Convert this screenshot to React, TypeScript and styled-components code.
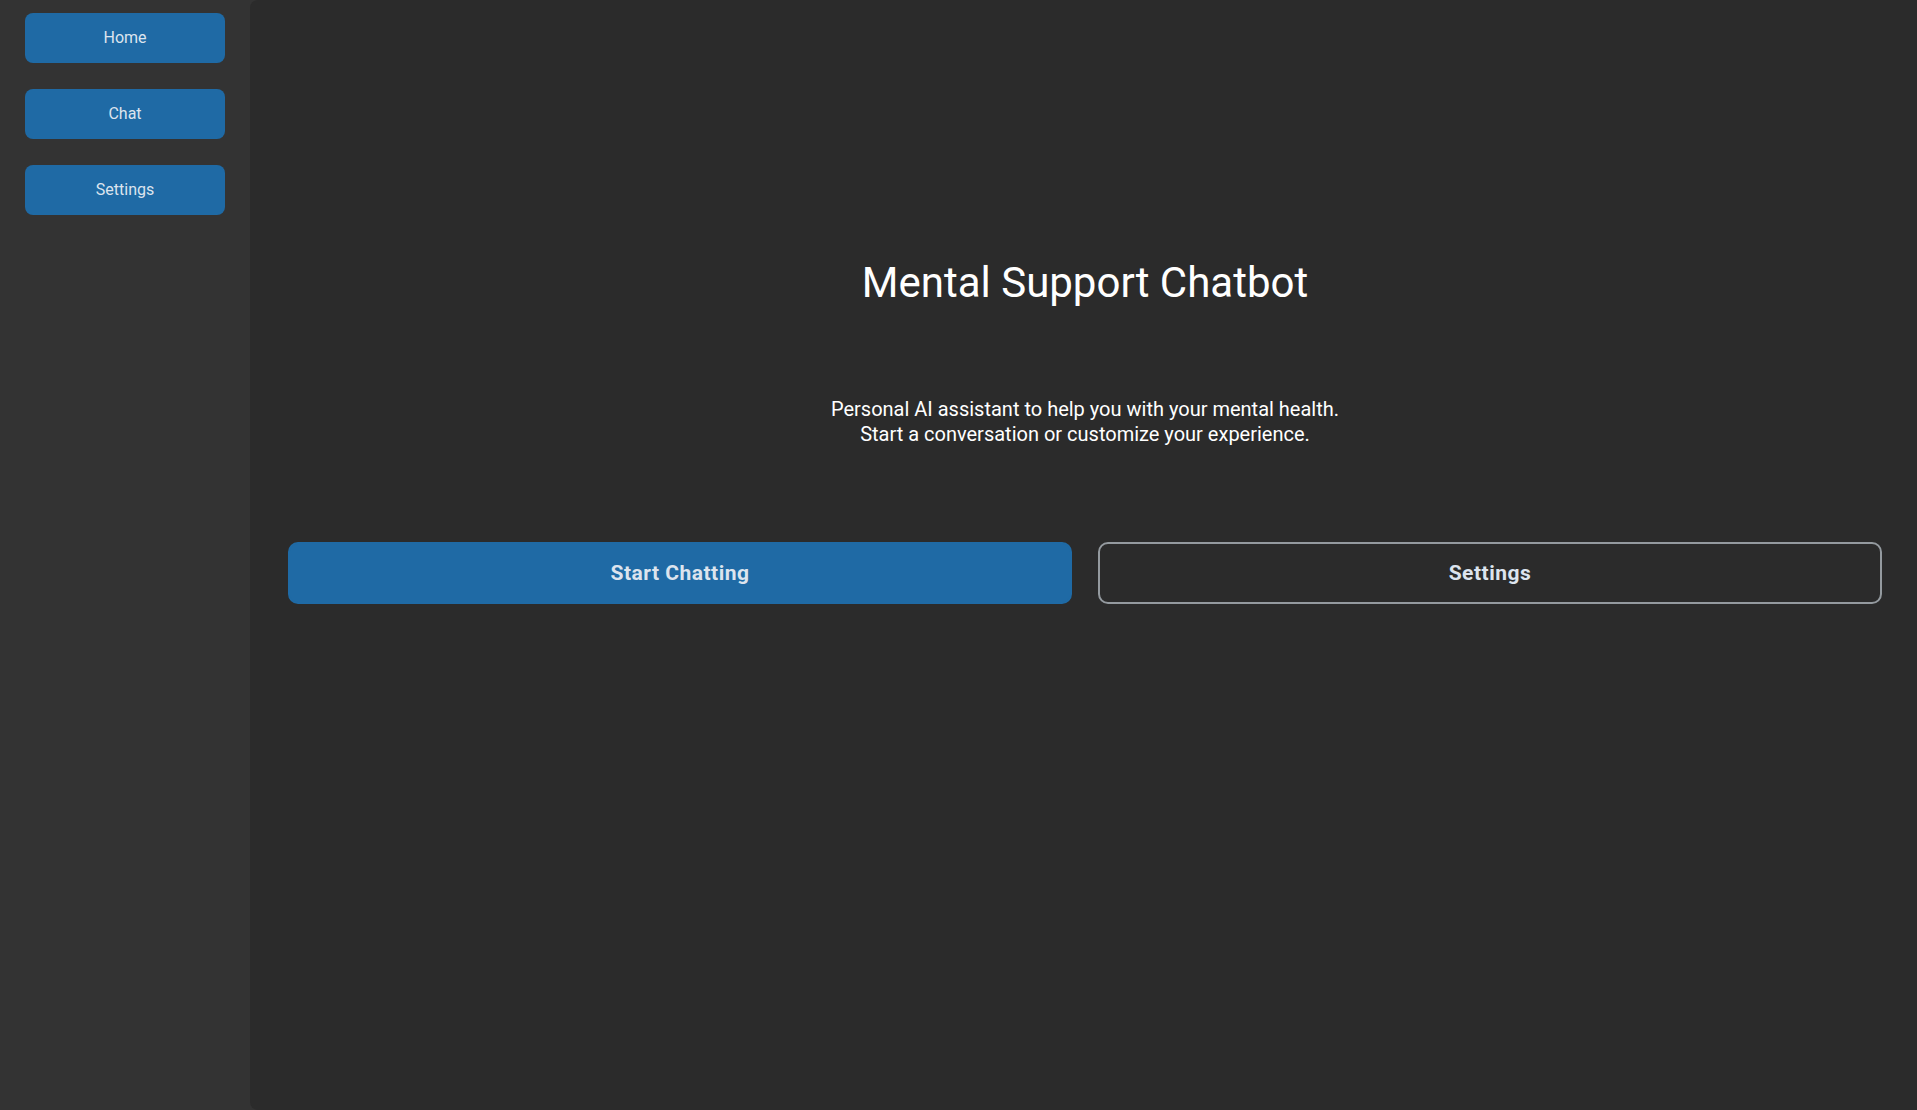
import styled, { createGlobalStyle } from "styled-components";

const GlobalStyle = createGlobalStyle`
  html, body {
    margin: 0;
    padding: 0;
    background-color: #333333;
  }
  * {
    box-sizing: border-box;
  }
`;

const colors = {
  SIDEBAR: "#333333",
  MAIN: "#2b2b2b",
  BLUE: "#1f6aa5",
  TEXT: "#dce4ee",
  BORDER: "#949a9f",
  WHITE: "#ffffff",
};

const S = {
  Layout: styled.div`
    display: flex;
    height: 100vh;
    font-family: Roboto, "Liberation Sans", sans-serif;
  `,
  Sidebar: styled.nav`
    width: 250px;
    flex-shrink: 0;
    background-color: ${colors.SIDEBAR};
    padding: 13px 25px;
    display: flex;
    flex-direction: column;
    gap: 26px;
  `,
  NavButton: styled.button`
    width: 200px;
    height: 50px;
    padding: 0 0 2px;
    border: none;
    border-radius: 8px;
    background-color: ${colors.BLUE};
    color: ${colors.TEXT};
    font-family: inherit;
    font-size: 16px;
    cursor: pointer;
  `,
  Main: styled.main`
    flex: 1;
    background-color: ${colors.MAIN};
    border-radius: 8px 0 0 8px;
    padding: 258px 35px 0 38px;
    display: flex;
    flex-direction: column;
    align-items: center;
  `,
  Title: styled.h1`
    margin: 0;
    font-size: 42px;
    line-height: 50px;
    font-weight: 400;
    color: ${colors.WHITE};
  `,
  Subtitle: styled.p`
    margin: 89px 0 0;
    font-size: 20px;
    line-height: 25px;
    text-align: center;
    color: ${colors.WHITE};
  `,
  Actions: styled.div`
    margin-top: 95px;
    width: 100%;
    display: grid;
    grid-template-columns: 1fr 1fr;
    gap: 26px;
  `,
  ActionButton: styled.button<{ $outlined?: boolean }>`
    height: 62px;
    border-radius: 10px;
    border: 2px solid ${({ $outlined }) => ($outlined ? colors.BORDER : colors.BLUE)};
    background-color: ${({ $outlined }) => ($outlined ? "transparent" : colors.BLUE)};
    color: ${colors.TEXT};
    font-family: inherit;
    font-size: 21px;
    font-weight: 700;
    letter-spacing: 0.5px;
    cursor: pointer;
  `,
};

function App() {
  return (
    <>
      <GlobalStyle />
      <S.Layout>
        <S.Sidebar>
          <S.NavButton>Home</S.NavButton>
          <S.NavButton>Chat</S.NavButton>
          <S.NavButton>Settings</S.NavButton>
        </S.Sidebar>
        <S.Main>
          <S.Title>Mental Support Chatbot</S.Title>
          <S.Subtitle>
            Personal AI assistant to help you with your mental health.
            <br />
            Start a conversation or customize your experience.
          </S.Subtitle>
          <S.Actions>
            <S.ActionButton>Start Chatting</S.ActionButton>
            <S.ActionButton $outlined>Settings</S.ActionButton>
          </S.Actions>
        </S.Main>
      </S.Layout>
    </>
  );
}

export default App;
